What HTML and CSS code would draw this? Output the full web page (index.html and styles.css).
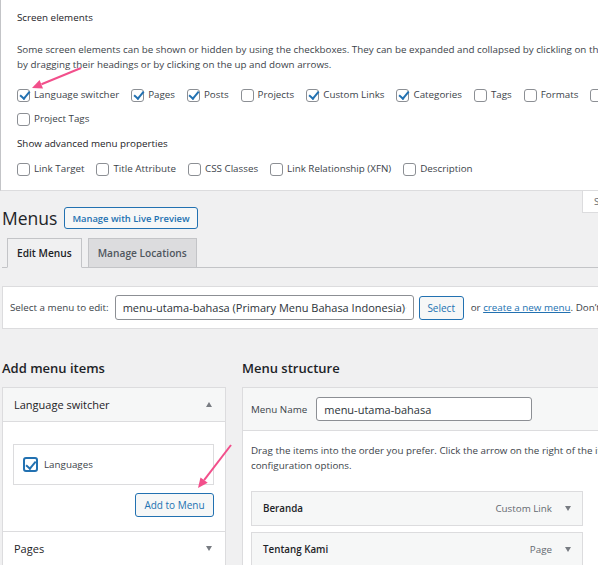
FILE: index.html
```html
<!DOCTYPE html>
<html lang="en">
<head>
<meta charset="utf-8">
<title>Menus</title>
<link rel="stylesheet" href="styles.css">
</head>
<body>
<div class="page">
  <section class="screen-meta">
    <div class="prefs">
      <div class="prefs-title">Screen elements</div>
      <p class="prefs-desc">Some screen elements can be shown or hidden by using the checkboxes. They can be expanded and collapsed by clickling on their headings, and arranged<br>by dragging their headings or by clicking on the up and down arrows.</p>
      <div class="check-list">
        <label class="check"><input type="checkbox" checked>Language switcher</label>
        <label class="check"><input type="checkbox" checked>Pages</label>
        <label class="check"><input type="checkbox" checked>Posts</label>
        <label class="check"><input type="checkbox">Projects</label>
        <label class="check"><input type="checkbox" checked>Custom Links</label>
        <label class="check"><input type="checkbox" checked>Categories</label>
        <label class="check"><input type="checkbox">Tags</label>
        <label class="check"><input type="checkbox">Formats</label>
        <label class="check"><input type="checkbox">Project Categories</label>
        <label class="check"><input type="checkbox">Project Tags</label>
      </div>
    </div>
    <div class="prefs">
      <div class="prefs-title advanced">Show advanced menu properties</div>
      <div class="check-list">
        <label class="check"><input type="checkbox">Link Target</label>
        <label class="check"><input type="checkbox">Title Attribute</label>
        <label class="check"><input type="checkbox">CSS Classes</label>
        <label class="check"><input type="checkbox">Link Relationship (XFN)</label>
        <label class="check"><input type="checkbox">Description</label>
      </div>
    </div>
  </section>

  <div class="screen-meta-links">
    <button class="screen-tab" type="button">Screen Options <span class="tab-arrow"></span></button>
  </div>

  <div class="wrap">
    <div class="title-row">
      <h1>Menus</h1>
      <a class="title-action" href="#">Manage with Live Preview</a>
    </div>

    <nav class="tabs">
      <a class="tab active" href="#">Edit Menus</a>
      <a class="tab" href="#">Manage Locations</a>
    </nav>

    <div class="manage-menus">
      <label class="select-label">Select a menu to edit:</label>
      <div class="select">
        <span>menu-utama-bahasa (Primary Menu Bahasa Indonesia)</span>
        <svg class="chev" viewBox="0 0 10 6" width="10" height="6"><path d="M1 1l4 4 4-4" fill="none" stroke="#50575e" stroke-width="1.4"/></svg>
      </div>
      <button class="btn" type="button">Select</button>
      <span class="or-text">or <a href="#">create a new menu</a>. Don’t forget to save your changes!</span>
    </div>

    <div class="columns">
      <div class="col-left">
        <h2>Add menu items</h2>
        <div class="accordion">
          <div class="acc-section">
            <h3 class="acc-title">Language switcher <span class="tri up"></span></h3>
            <div class="acc-content">
              <div class="item-list">
                <label class="check lang"><input type="checkbox" class="focused" checked>Languages</label>
              </div>
              <div class="button-row">
                <button class="btn" type="button">Add to Menu</button>
              </div>
            </div>
          </div>
          <div class="acc-section">
            <h3 class="acc-title">Pages <span class="tri"></span></h3>
          </div>
        </div>
      </div>

      <div class="col-right">
        <h2>Menu structure</h2>
        <div class="menu-edit">
          <div class="menu-header">
            <label class="menu-name-label">Menu Name</label>
            <input class="menu-name" type="text" value="menu-utama-bahasa">
          </div>
          <div class="menu-body">
            <p class="menu-desc">Drag the items into the order you prefer. Click the arrow on the right of the item to reveal additional<br>configuration options.</p>
            <ul class="menu-items">
              <li class="menu-item"><span class="item-title">Beranda</span><span class="item-type">Custom Link</span><span class="tri"></span></li>
              <li class="menu-item"><span class="item-title">Tentang Kami</span><span class="item-type">Page</span><span class="tri"></span></li>
            </ul>
          </div>
        </div>
      </div>
    </div>
  </div>

  <svg class="annot" width="720" height="565" viewBox="0 0 720 565">
    <line x1="81" y1="68" x2="41.5" y2="84.2" stroke="#f24f8b" stroke-width="2"/>
    <polygon points="32,88 43,88.4 39.6,80" fill="#f24f8b"/>
    <line x1="231" y1="445" x2="204.1" y2="480.1" stroke="#f24f8b" stroke-width="2"/>
    <polygon points="198,488 207.7,482.8 200.5,477.4" fill="#f24f8b"/>
  </svg>
</div>
</body>
</html>
```

FILE: styles.css
```css
html, body {
  margin: 0;
  padding: 0;
  overflow: hidden;
  background: #f0f0f1;
}

body {
  font-family: "Open Sans", "Noto Sans", sans-serif;
  font-size: 9.8px;
  color: #3c434a;
}

.page {
  position: relative;
  width: 720px;
  height: 565px;
}

/* Screen options panel */
.screen-meta {
  background: #fff;
  border-left: 1px solid #c3c4c7;
  border-bottom: 1px solid #dcdcde;
  padding: 10px 0 13px 16px;
}

.prefs-title {
  line-height: 16px;
  color: #1d2327;
  font-weight: 500;
}

.prefs-title.advanced {
  margin-top: 9px;
}

.prefs-desc {
  margin: 16px 0 15px;
  line-height: 15px;
  white-space: nowrap;
}

.check-list {
  display: flex;
  flex-wrap: wrap;
  column-gap: 12px;
  row-gap: 8px;
}

.prefs-title.advanced + .check-list {
  margin-top: 9px;
}

.check {
  display: inline-flex;
  align-items: center;
  gap: 4px;
  line-height: 16px;
  white-space: nowrap;
}

input[type="checkbox"] {
  appearance: none;
  -webkit-appearance: none;
  position: relative;
  margin: 0;
  width: 13px;
  height: 13px;
  border: 1px solid #8c8f94;
  border-radius: 3px;
  background: #fff;
  box-sizing: border-box;
  flex: none;
}

input[type="checkbox"]:checked::before {
  content: "";
  position: absolute;
  left: 3.5px;
  top: -0.5px;
  width: 3.5px;
  height: 8px;
  border-right: 2px solid #2271b1;
  border-bottom: 2px solid #2271b1;
  transform: rotate(40deg);
}

input[type="checkbox"].focused {
  width: 15px;
  height: 15px;
  border: 2px solid #2271b1;
  border-radius: 3px;
}

input[type="checkbox"].focused::before {
  left: 3px;
  top: -0.5px;
}

/* Screen options tab */
.screen-meta-links {
  float: right;
  margin-right: 20px;
}

.screen-tab {
  display: block;
  width: 118px;
  height: 22px;
  box-sizing: border-box;
  margin: 0;
  padding: 0 6px 0 11px;
  border: 1px solid #dcdcde;
  border-top: 0;
  background: #fff;
  font: inherit;
  color: #646970;
  text-align: left;
  white-space: nowrap;
}

.tab-arrow {
  display: inline-block;
  border-left: 3px solid transparent;
  border-right: 3px solid transparent;
  border-top: 4px solid #787c82;
  margin-left: 4px;
}

/* Main wrap */
.wrap {
  margin: 0 20px 0 2px;
  padding-top: 14px;
}

.title-row {
  display: flex;
  align-items: center;
  gap: 7px;
  height: 26px;
}

h1 {
  margin: 0;
  font-size: 17.5px;
  font-weight: 400;
  color: #1d2327;
  line-height: 26px;
}

.title-action {
  display: inline-flex;
  align-items: center;
  height: 22px;
  box-sizing: border-box;
  padding: 0 7px;
  border: 1px solid #2271b1;
  border-radius: 3px;
  background: #f6f7f7;
  color: #2271b1;
  font-weight: 600;
  text-decoration: none;
  font-size: 9.4px;
}

.tabs {
  display: flex;
  gap: 6px;
  margin-top: 7px;
  padding-left: 5px;
  border-bottom: 1px solid #c3c4c7;
}

.tab {
  display: flex;
  align-items: center;
  height: 30px;
  box-sizing: border-box;
  margin-bottom: -1px;
  padding: 0 9px;
  border: 1px solid #c3c4c7;
  background: #dcdcde;
  color: #50575e;
  font-size: 10.2px;
  font-weight: 600;
  text-decoration: none;
}

.tab.active {
  background: #f0f0f1;
  border-bottom-color: #f0f0f1;
  color: #1d2327;
}

.manage-menus {
  display: flex;
  align-items: center;
  margin-top: 18px;
  height: 43px;
  box-sizing: border-box;
  padding: 0 7px;
  background: #fff;
  border: 1px solid #dcdcde;
  white-space: nowrap;
}

.select-label {
  margin-right: 6px;
}

.select {
  display: flex;
  align-items: center;
  justify-content: space-between;
  width: 299px;
  height: 25px;
  box-sizing: border-box;
  padding: 0 6px 0 7px;
  border: 1px solid #8c8f94;
  border-radius: 3px;
  background: #fff;
  font-size: 11px;
  color: #2c3338;
}

.btn {
  display: inline-flex;
  align-items: center;
  justify-content: center;
  height: 24px;
  box-sizing: border-box;
  padding: 0 9px;
  margin: 0;
  border: 1px solid #2271b1;
  border-radius: 3px;
  background: #f6f7f7;
  color: #2271b1;
  font: inherit;
  font-size: 10px;
  white-space: nowrap;
}

.manage-menus .btn {
  margin-left: 5px;
  width: 45px;
}

.or-text {
  margin-left: 7px;
}

.or-text a {
  color: #2271b1;
}

/* Columns */
.columns {
  display: flex;
  gap: 16px;
  margin-top: 29px;
}

.col-left {
  width: 224px;
  flex: none;
}

.col-right {
  flex: 1;
}

h2 {
  margin: 0 0 9px;
  font-size: 13px;
  line-height: 20px;
  font-weight: 600;
  color: #1d2327;
}

.accordion {
  border: 1px solid #dcdcde;
  border-bottom: 0;
  background: #fff;
}

.acc-section + .acc-section {
  border-top: 1px solid #dcdcde;
}

.acc-title {
  display: flex;
  align-items: center;
  justify-content: space-between;
  margin: 0;
  height: 33px;
  padding: 0 13px 0 11px;
  background: #f6f7f7;
  font-size: 11px;
  font-weight: 400;
  color: #1d2327;
}

.acc-section:last-child .acc-title {
  background: #fff;
}

.acc-content {
  border-top: 1px solid #dcdcde;
  padding: 22px 11px 14px 10px;
}

.item-list {
  display: flex;
  align-items: center;
  height: 41px;
  box-sizing: border-box;
  padding: 0 9px;
  border: 1px solid #dcdcde;
}

.check.lang {
  gap: 6px;
}

.button-row {
  display: flex;
  justify-content: flex-end;
  margin-top: 8px;
}

.button-row .btn {
  width: 79px;
}

.tri {
  display: inline-block;
  width: 0;
  height: 0;
  border-left: 3.5px solid transparent;
  border-right: 3.5px solid transparent;
  border-top: 5px solid #787c82;
}

.tri.up {
  border-top: 0;
  border-bottom: 5px solid #787c82;
}

.menu-edit {
  background: #fff;
  border: 1px solid #dcdcde;
  border-right: 0;
}

.menu-header {
  display: flex;
  align-items: center;
  gap: 9px;
  height: 42px;
  padding: 0 8px;
  background: #f6f7f7;
  border-bottom: 1px solid #dcdcde;
}

.menu-name {
  width: 216px;
  height: 24px;
  box-sizing: border-box;
  margin: 0;
  padding: 0 7px;
  border: 1px solid #8c8f94;
  border-radius: 3px;
  font: inherit;
  font-size: 11px;
  color: #2c3338;
}

.menu-body {
  padding: 12px 8px 0;
}

.menu-desc {
  margin: 0 0 18px;
  line-height: 15px;
  white-space: nowrap;
}

.menu-items {
  list-style: none;
  margin: 0;
  padding: 0;
  width: 332px;
}

.menu-item {
  display: flex;
  align-items: center;
  height: 35px;
  box-sizing: border-box;
  padding: 0 11px 0 11px;
  margin-bottom: 6px;
  border: 1px solid #dcdcde;
  background: #f6f7f7;
}

.item-title {
  flex: 1;
  font-weight: 600;
  color: #1d2327;
}

.item-type {
  color: #646970;
  margin-right: 13px;
}

.annot {
  position: absolute;
  left: 0;
  top: 0;
  pointer-events: none;
}
```
